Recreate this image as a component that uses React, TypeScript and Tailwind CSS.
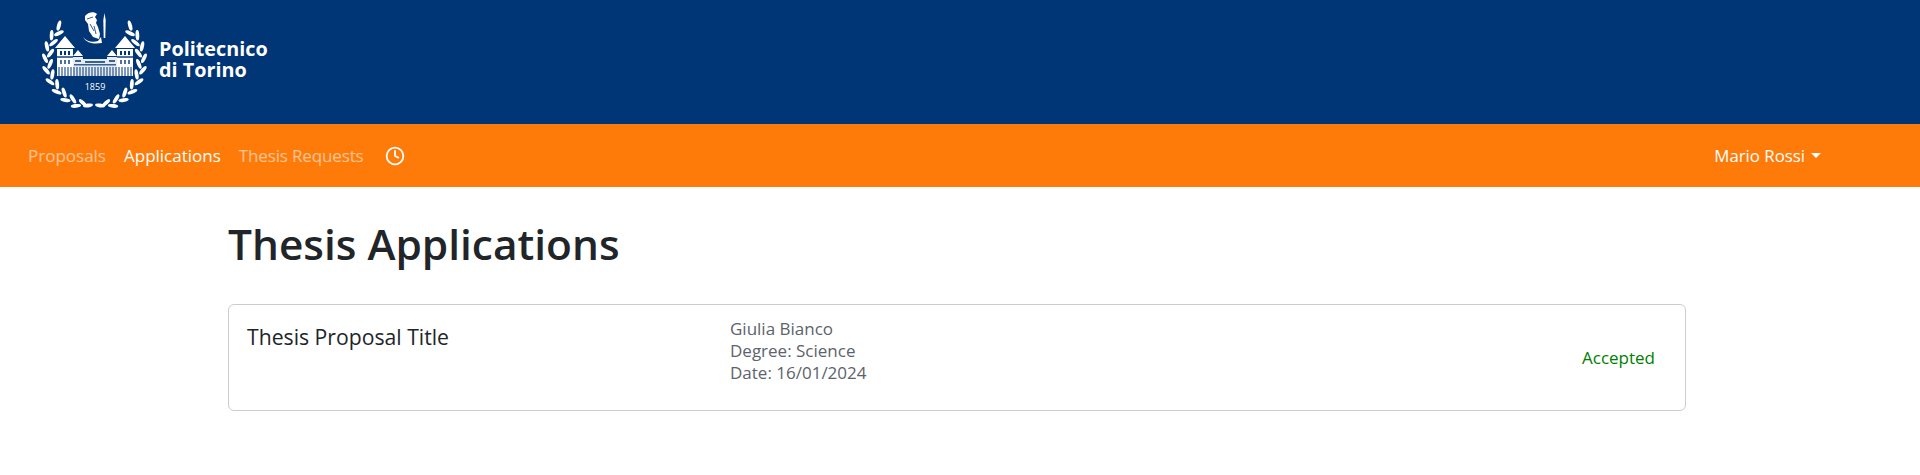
import { Clock } from 'lucide-react';

const font = "font-['Open_Sans','Noto_Sans',sans-serif]";

// wreath leaves, placed on two rings around the seal
const angles = [46, 60, 74, 88, 102, 116, 130, 144, 158];

function Leaf({ angle, side, outer }: { angle: number; side: 1 | -1; outer: boolean }) {
  const ring = outer ? 49.5 : 44.5;
  const rad = (angle * Math.PI) / 180;
  const x = 94.5 + side * ring * Math.sin(rad);
  const y = 60 - ring * Math.cos(rad);
  const tilt = side * (angle + (outer ? 28 : -28));
  return <ellipse cx={x} cy={y} rx="5.2" ry="1.9" fill="#fff" transform={`rotate(${tilt} ${x} ${y})`} />;
}

function Seal() {
  return (
    <svg viewBox="40 8 112 104" width="112" height="104" className="shrink-0">
      {angles.map((a) => (
        <g key={a}>
          <Leaf angle={a} side={-1} outer />
          <Leaf angle={a + 7} side={-1} outer={false} />
          <Leaf angle={a} side={1} outer />
          <Leaf angle={a + 7} side={1} outer={false} />
        </g>
      ))}
      {/* closing leaves at the foot of the wreath */}
      <ellipse cx="88" cy="105.5" rx="5" ry="1.9" fill="#fff" transform="rotate(-8 88 105.5)" />
      <ellipse cx="100" cy="105.5" rx="5" ry="1.9" fill="#fff" transform="rotate(8 100 105.5)" />
      {/* athena figure */}
      <path d="M85 16c3-4 9-5 12-2l-2 3 2 3-1 3 2 4 2 7-1 5-6-2-4-6-1-7-3-4z" fill="#fff" />
      <path d="M87 19l6-2M90 24l4 7M94 26l2 8" stroke="#003576" strokeWidth="0.8" fill="none" />
      <path d="M83 37c3 4 9 6 15 4l3-4 1 6c-7 1-15 1-19-6z" fill="#fff" />
      <path d="M104.5 13l1.2 7-.4 18h-1.6l-.4-18z" fill="#fff" />
      {/* towers */}
      <path d="M55 48l10-12 10 12zM115 48l10-12 10 12z" fill="#fff" />
      <path d="M57 49h16v27H57zM117 49h16v27h-16z" fill="#fff" />
      <path d="M60 51h2v4h-2zM64 51h2v4h-2zM68 51h2v4h-2zM120 51h2v4h-2zM124 51h2v4h-2zM128 51h2v4h-2z" fill="#003576" />
      <path d="M57 56h16v2H57zM117 56h16v2h-16zM60 60h2v4h-2zM64 60h2v4h-2zM68 60h2v4h-2zM120 60h2v4h-2zM124 60h2v4h-2zM128 60h2v4h-2z" fill="#003576" opacity="0.7" />
      {/* wings and central block */}
      <path d="M73 56l5-6 5 6zM107 56l5-6 5 6z" fill="#fff" />
      <path d="M73 57h10v19H73zM107 57h10v19h-10zM83 59h24v17H83z" fill="#fff" opacity="0.9" />
      <path d="M85 61h20v2H85zM75 60h6v2h-6zM109 60h6v2h-6zM74 64h42v1.5H74z" fill="#003576" opacity="0.75" />
      {/* railing */}
      <path
        d="M59 67v9M62 67v9M65 67v9M68 67v9M71 67v9M74 67v9M77 67v9M80 67v9M83 67v9M86 67v9M89 67v9M92 67v9M95 67v9M98 67v9M101 67v9M104 67v9M107 67v9M110 67v9M113 67v9M116 67v9M119 67v9M122 67v9M125 67v9M128 67v9M131 67v9"
        stroke="#003576"
        strokeWidth="1"
      />
      <text x="95" y="90" textAnchor="middle" fill="#fff" fontSize="9" fontFamily="'Open Sans', sans-serif">
        1859
      </text>
    </svg>
  );
}

export default function App() {
  return (
    <div className={`${font} min-h-[475px] bg-white text-[#212529]`}>
      {/* Logo band */}
      <header className="flex h-[124px] items-start bg-[#003576] pl-[40px] pt-[8px]">
        <Seal />
        <div className="ml-[7px] mt-[30px] text-[19.8px] leading-[21px] font-bold text-white">
          Politecnico
          <br />
          di Torino
        </div>
      </header>

      {/* Navbar */}
      <nav className="flex h-[63px] items-center justify-between bg-[#fe7b09] pl-[19px] pr-[91px] text-[17px] leading-[24px]">
        <div className="flex items-center">
          <a className="px-[9px] text-white/55">Proposals</a>
          <a className="px-[9px] text-white">Applications</a>
          <a className="px-[9px] tracking-[-0.15px] text-white/55">Thesis Requests</a>
          <a className="ml-[4px] px-[8px] text-white">
            <Clock className="h-[20px] w-[20px]" strokeWidth={2.2} />
          </a>
        </div>
        <button className="flex items-center px-[8px] text-[16.8px] text-white">
          Mario Rossi
          <span className="ml-[6px] h-0 w-0 border-x-[5px] border-t-[5px] border-x-transparent border-t-white" />
        </button>
      </nav>

      {/* Page content */}
      <main className="pl-[228px] pr-[234px]">
        <h1 className="pt-[33px] text-[42.4px] leading-[48px] font-semibold">Thesis Applications</h1>
        <div className="mt-[36px] flex h-[107px] rounded-[6px] border border-black/20 pl-[18px] pr-[30px]">
          <div className="w-[483px] pt-[20px] text-[21.2px] leading-[24px]">Thesis Proposal Title</div>
          <div className="flex-1 pt-[13px] text-[17px] leading-[22px] text-[#5c636a]">
            <div>Giulia Bianco</div>
            <div>Degree: Science</div>
            <div>Date: 16/01/2024</div>
          </div>
          <div className="self-center text-[17px] text-[#008000]">Accepted</div>
        </div>
      </main>
    </div>
  );
}
